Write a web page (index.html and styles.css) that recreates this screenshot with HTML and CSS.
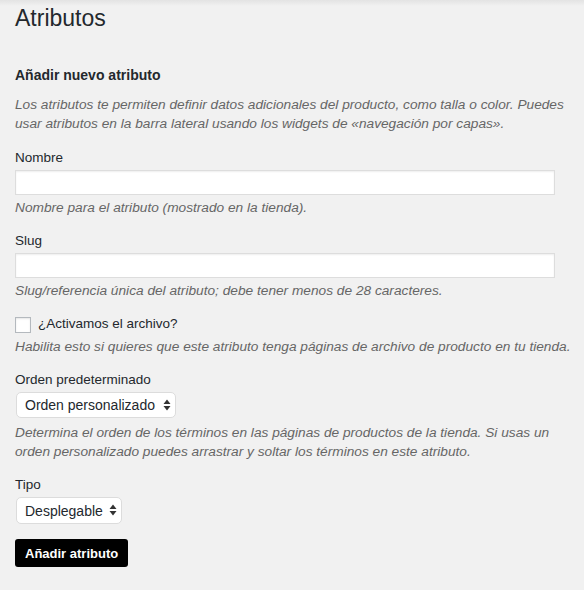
FILE: index.html
```html
<!DOCTYPE html>
<html lang="es">
<head>
<meta charset="utf-8">
<title>Atributos</title>
<link rel="stylesheet" href="styles.css">
</head>
<body>
<div class="wrap">
  <h1 class="page-title">Atributos</h1>
  <form class="attr-form">
    <h2 class="form-heading">Añadir nuevo atributo</h2>
    <p class="intro">Los atributos te permiten definir datos adicionales del producto, como talla o color. Puedes usar atributos en la barra lateral usando los widgets de «navegación por capas».</p>

    <div class="field">
      <label class="field-label" for="name">Nombre</label>
      <input class="text-input" type="text" id="name">
      <p class="help">Nombre para el atributo (mostrado en la tienda).</p>
    </div>

    <div class="field">
      <label class="field-label" for="slug">Slug</label>
      <input class="text-input" type="text" id="slug">
      <p class="help">Slug/referencia única del atributo; debe tener menos de 28 caracteres.</p>
    </div>

    <div class="field">
      <label class="check-row"><span class="checkbox"></span><span>¿Activamos el archivo?</span></label>
      <p class="help">Habilita esto si quieres que este atributo tenga páginas de archivo de producto en tu tienda.</p>
    </div>

    <div class="field">
      <label class="field-label" for="order">Orden predeterminado</label>
      <span class="select-wrap select-order">
        <select class="select" id="order"><option>Orden personalizado</option></select>
        <svg class="select-arrows" width="8" height="12" viewBox="0 0 8 12"><path d="M4 0.5 L7.5 5 H0.5 Z M4 11.5 L7.5 7 H0.5 Z" fill="#333"/></svg>
      </span>
      <p class="help help-wide">Determina el orden de los términos en las páginas de productos de la tienda. Si usas un orden personalizado puedes arrastrar y soltar los términos en este atributo.</p>
    </div>

    <div class="field">
      <label class="field-label" for="type">Tipo</label>
      <span class="select-wrap select-type">
        <select class="select" id="type"><option>Desplegable</option></select>
        <svg class="select-arrows" width="8" height="12" viewBox="0 0 8 12"><path d="M4 0.5 L7.5 5 H0.5 Z M4 11.5 L7.5 7 H0.5 Z" fill="#333"/></svg>
      </span>
    </div>

    <button class="submit" type="button">Añadir atributo</button>
  </form>
</div>
</body>
</html>
```

FILE: styles.css
```css
html, body {
  margin: 0;
  padding: 0;
}
body {
  background: linear-gradient(#e3e3e3, #f1f1f1 6px) no-repeat, #f1f1f1;
  font-family: "Liberation Sans", Arial, Helvetica, sans-serif;
  color: #23282d;
  font-size: 13.5px;
  min-height: 590px;
}
.wrap {
  padding: 0 5px 0 15px;
}
.page-title {
  margin: 4px 0 0;
  font-size: 23px;
  line-height: 29px;
  font-weight: 400;
  color: #23282d;
}
.attr-form {
  display: flex;
  flex-direction: column;
  align-items: flex-start;
}
.form-heading {
  margin: 32px 0 0;
  font-size: 14px;
  line-height: 20px;
  font-weight: 700;
}
.intro {
  margin: 10px 0 0;
  font-style: italic;
  font-size: 13.7px;
  color: #666;
  line-height: 19px;
}
.field {
  display: flex;
  flex-direction: column;
  align-items: flex-start;
  margin-top: 14px;
  align-self: stretch;
}
.attr-form > .intro + .field {
  margin-top: 15px;
}
.field-label {
  line-height: 20px;
}
.text-input {
  box-sizing: border-box;
  width: 540px;
  height: 25px;
  margin: 2px 0 0;
  border: 1px solid #ddd;
  background: #fff;
  box-shadow: inset 0 1px 2px rgba(0,0,0,0.07);
  padding: 2px 5px;
  font: inherit;
}
.help {
  margin: 3px 0 0;
  font-style: italic;
  font-size: 13.7px;
  color: #666;
  line-height: 19px;
}
.help-wide {
  margin-top: 5px;
}
.check-row {
  display: flex;
  align-items: center;
  gap: 7px;
  line-height: 20px;
}
.checkbox {
  box-sizing: border-box;
  width: 16px;
  height: 16px;
  border: 1px solid #b4b9be;
  background: #fff;
  box-shadow: inset 0 1px 2px rgba(0,0,0,0.1);
  margin-top: 1px;
}
.select-wrap {
  position: relative;
  display: inline-block;
  margin: 2px 0 0 1px;
}
.select {
  -webkit-appearance: none;
  appearance: none;
  box-sizing: border-box;
  height: 26px;
  border: 1px solid #dcdcdc;
  border-radius: 5px;
  background: #fff;
  color: #23282d;
  font-family: "Liberation Sans", Arial, Helvetica, sans-serif;
  font-size: 14px;
  padding: 0 14px 0 8px;
  margin: 0;
  display: block;
}
.select-order .select {
  width: 160px;
}
.select-type .select {
  width: 106px;
  height: 27px;
}
.select-arrows {
  position: absolute;
  right: 5px;
  top: 7px;
  pointer-events: none;
}
.submit {
  margin-top: 15px;
  box-sizing: border-box;
  height: 28px;
  padding: 0 10px;
  background: #000;
  color: #fff;
  border: 0;
  border-radius: 3px;
  font-family: "Liberation Sans", Arial, Helvetica, sans-serif;
  font-size: 13px;
  font-weight: 700;
}
```
